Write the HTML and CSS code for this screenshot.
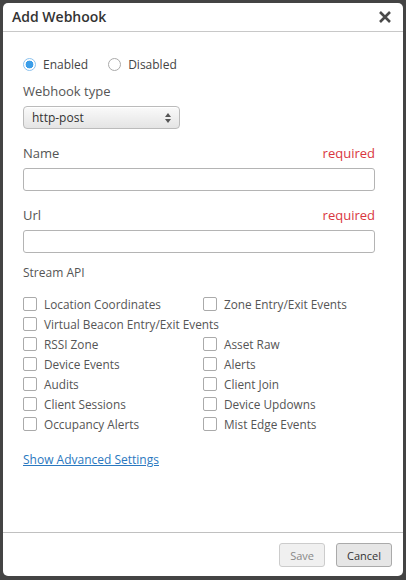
FILE: index.html
```html
<!DOCTYPE html>
<html>
  <head>
    <title>Add Webhook</title>
    <meta name="viewport" content="width=device-width, initial-scale=1" />
    <link rel="stylesheet" href="styles.css">
  </head>

  <body>
    <div class="modal">
      <div class="modal-header">
        <h3>Add Webhook</h3>
        <svg class="close" width="12" height="12" viewBox="0 0 12 12">
          <path d="M1 1 L11 11 M11 1 L1 11" stroke="#4a4a4a" stroke-width="2.6" />
        </svg>
      </div>

      <div class="modal-body">
        <div class="radio-row">
          <label class="radio"><span class="dot checked"></span>Enabled</label>
          <label class="radio"><span class="dot"></span>Disabled</label>
        </div>

        <div class="field-label">Webhook type</div>
        <div class="select">
          <span>http-post</span>
          <svg width="6" height="10" viewBox="0 0 6 10">
            <path d="M3 0 L6 4 L0 4 Z" fill="#555" />
            <path d="M0 6 L6 6 L3 10 Z" fill="#555" />
          </svg>
        </div>

        <div class="field-label split">
          <span>Name</span><span class="required">required</span>
        </div>
        <div class="text-input"></div>

        <div class="field-label split">
          <span>Url</span><span class="required">required</span>
        </div>
        <div class="text-input"></div>

        <div class="section-label">Stream API</div>
        <div class="checks">
          <label class="check"><span class="box"></span>Location Coordinates</label>
          <label class="check"><span class="box"></span>Zone Entry/Exit Events</label>
          <label class="check wide"><span class="box"></span>Virtual Beacon Entry/Exit Events</label>
          <label class="check"><span class="box"></span>RSSI Zone</label>
          <label class="check"><span class="box"></span>Asset Raw</label>
          <label class="check"><span class="box"></span>Device Events</label>
          <label class="check"><span class="box"></span>Alerts</label>
          <label class="check"><span class="box"></span>Audits</label>
          <label class="check"><span class="box"></span>Client Join</label>
          <label class="check"><span class="box"></span>Client Sessions</label>
          <label class="check"><span class="box"></span>Device Updowns</label>
          <label class="check"><span class="box"></span>Occupancy Alerts</label>
          <label class="check"><span class="box"></span>Mist Edge Events</label>
        </div>

        <a href="#" class="advanced">Show Advanced Settings</a>
      </div>

      <div class="modal-footer">
        <button class="btn disabled">Save</button>
        <button class="btn">Cancel</button>
      </div>
    </div>
  </body>
</html>
```

FILE: styles.css
```css
    *,
    *:before,
    *:after {
      box-sizing: border-box;
    }

    body {
      font-family: "Open Sans", "Liberation Sans", sans-serif;
      margin: 0;
      padding: 3px;
      background: #444;
      color: #555;
      height: 580px;
      overflow: hidden;
    }

    .modal {
      width: 400px;
      height: 573px;
      background: #fff;
      border-radius: 5px;
      display: flex;
      flex-direction: column;
    }

    .modal-header {
      height: 29px;
      border-bottom: 1px solid #c8c8c8;
      display: flex;
      align-items: center;
      justify-content: space-between;
      padding: 0 12px 1px 9px;
    }

    .modal-header h3 {
      margin: 0;
      font-size: 14px;
      font-weight: 600;
      color: #333;
    }

    .radio-row {
      display: flex;
      gap: 20px;
      height: 14px;
      align-items: center;
      font-size: 12px;
      color: #444;
    }

    .modal-body {
      flex: 1;
      padding: 25px 28px 0 20px;
    }

    .radio {
      display: flex;
      align-items: center;
      gap: 7px;
    }

    .dot {
      width: 13px;
      height: 13px;
      border-radius: 50%;
      border: 1px solid #aaa;
      background: #fff;
      display: inline-block;
    }

    .dot.checked {
      border-color: #8cc2ee;
      background: radial-gradient(circle, #3b9ee9 0, #3b9ee9 3.6px, #fff 4.2px);
    }

    .field-label {
      margin-top: 11px;
      line-height: 18px;
      font-size: 13px;
      color: #555;
    }

    .field-label.split {
      margin-top: 15px;
      display: flex;
      justify-content: space-between;
    }

    .required {
      color: #d9363e;
    }

    .select {
      margin-top: 6px;
      width: 157px;
      height: 23px;
      border: 1px solid #bbb;
      border-radius: 4px;
      background: linear-gradient(#fafafa, #e4e4e4);
      box-shadow: inset 0 1px 0 #fff;
      display: flex;
      align-items: center;
      justify-content: space-between;
      padding: 0 8px 0 8px;
      font-size: 12px;
      color: #333;
    }

    .text-input {
      margin-top: 6px;
      height: 23px;
      border: 1px solid #b4b4b4;
      border-radius: 3px;
      background: #fff;
    }

    .section-label {
      margin-top: 11px;
      line-height: 18px;
      font-size: 12px;
      color: #555;
    }

    .checks {
      margin-top: 12px;
      display: grid;
      grid-template-columns: 180px 1fr;
      grid-auto-rows: 20px;
      font-size: 11.8px;
      color: #555;
    }

    .check {
      display: flex;
      align-items: center;
      gap: 7px;
    }

    .check.wide {
      grid-column: 1 / 3;
    }

    .box {
      width: 14px;
      height: 14px;
      border: 1px solid #aaa;
      border-radius: 2px;
      background: #fff;
      display: inline-block;
    }

    .advanced {
      display: inline-block;
      margin-top: 17px;
      line-height: 18px;
      font-size: 12px;
      color: #2a78c0;
      text-decoration: underline;
    }

    .modal-footer {
      height: 44px;
      border-top: 1px solid #c0c0c0;
      display: flex;
      justify-content: flex-end;
      align-items: flex-start;
      gap: 11px;
      padding: 10px 11px 0 0;
    }

    .btn {
      font-family: "Open Sans", "Liberation Sans", sans-serif;
      height: 24px;
      padding: 0 10px;
      font-size: 11px;
      color: #333;
      background: #e6e6e6;
      border: 1px solid #aaa;
      border-radius: 3px;
    }

    .btn.disabled {
      color: #888;
      background: #f0f0f0;
      border-color: #ccc;
    }
```
